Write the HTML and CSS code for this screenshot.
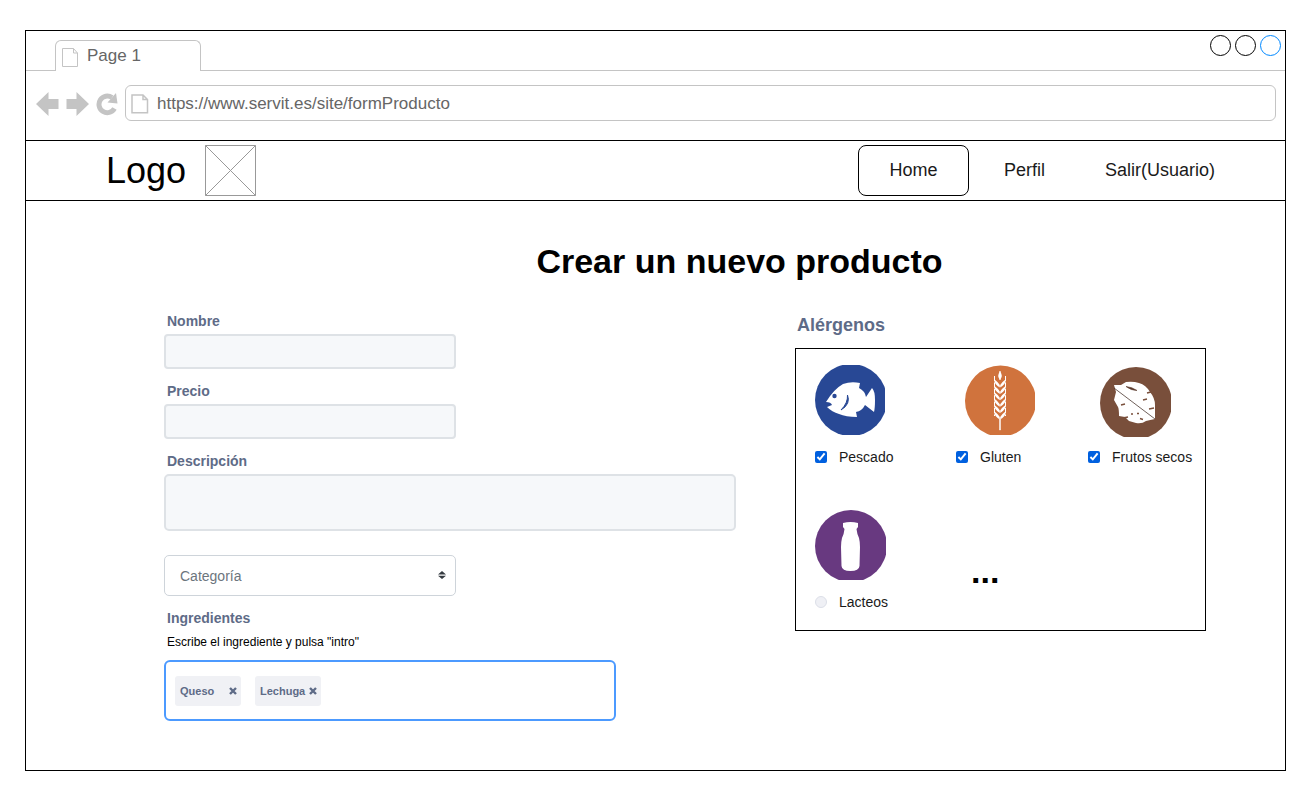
FILE: index.html
```html
<!DOCTYPE html>
<html lang="es">
<head>
<meta charset="utf-8">
<meta name="viewport" content="width=device-width, initial-scale=1">
<title>Crear un nuevo producto</title>
<link rel="stylesheet" href="styles.css">
</head>
<body>
<div class="window">
  <div class="tabstrip">
    <div class="strip-lead"></div>
    <div class="tab">
      <svg class="tab-icon" width="17" height="19" viewBox="0 0 17 19" fill="none" stroke="#c4c4c4"><path d="M.5 .5H11.500L15.500 5V18.500H.5ZM11.500 .5V5H15.500"/></svg>
      <span>Page 1</span>
    </div>
    <div class="strip-rest">
      <button class="win-btn" type="button" aria-label="Minimizar"></button>
      <button class="win-btn" type="button" aria-label="Maximizar"></button>
      <button class="win-btn win-close" type="button" aria-label="Cerrar"></button>
    </div>
  </div>

  <div class="toolbar">
    <button class="tool" type="button" aria-label="Atrás"><svg width="23" height="24" viewBox="0 0 23 24" fill="#c4c4c4"><path d="M0 12L12.500 0V7H22.500V17H12.500V24Z"/></svg></button>
    <button class="tool" type="button" aria-label="Adelante"><svg width="23" height="24" viewBox="0 0 23 24" fill="#c4c4c4"><path d="M23 12L10.500 0V7H.5V17H10.500V24Z"/></svg></button>
    <button class="tool" type="button" aria-label="Recargar"><svg width="22" height="24" viewBox="0 0 22 24"><path d="M18.500 16.500A8.300 8.300 0 1 1 16 5.500" fill="none" stroke="#c4c4c4" stroke-width="5"/><path d="M20 1L21.500 11.500L11.500 10.500Z" fill="#c4c4c4"/></svg></button>
    <div class="address">
      <svg width="18" height="20" viewBox="0 0 18 20" fill="none" stroke="#c4c4c4" stroke-width="1.500"><path d="M1 1H12L16.500 5.500V18.800H1ZM12 1V5.500H16.500"/></svg>
      <input class="url" type="text" aria-label="Dirección" value="https://www.servit.es/site/formProducto">
    </div>
  </div>

  <header class="site-header">
    <div class="brand">
      <span class="brand-name">Logo</span>
      <svg width="51" height="51" viewBox="0 0 51 51" fill="none" stroke="#999"><path d="M.5 .5H50.500V50.500H.5ZM.5 .5L50.500 50.500M50.500 .5L.5 50.500"/></svg>
    </div>
    <nav class="nav">
      <a class="nav-link active" href="#">Home</a>
      <a class="nav-link" href="#">Perfil</a>
      <a class="nav-link" href="#">Salir(Usuario)</a>
    </nav>
  </header>

  <main class="main">
    <h1 class="title">Crear un nuevo producto</h1>
    <form class="columns">
      <div class="fields">
        <div class="field">
          <label class="label" for="nombre">Nombre</label>
          <input class="control half" id="nombre" type="text">
        </div>
        <div class="field">
          <label class="label" for="precio">Precio</label>
          <input class="control half" id="precio" type="text">
        </div>
        <div class="field">
          <label class="label" for="descripcion">Descripción</label>
          <textarea class="control area" id="descripcion"></textarea>
        </div>
        <div class="select-wrap half">
          <select class="select" aria-label="Categoría"><option>Categoría</option></select>
          <svg class="select-arrows" width="8" height="8" viewBox="0 0 8 8" fill="#343a40"><path d="M0 3.400L4 0L8 3.400ZM0 4.800H8L4 8Z"/></svg>
        </div>
        <div class="ingredients">
          <label class="label" for="ingrediente">Ingredientes</label>
          <p class="hint">Escribe el ingrediente y pulsa "intro"</p>
          <div class="chips">
            <span class="chip">Queso <button class="chip-x" type="button" aria-label="Quitar Queso"><svg width="8" height="8" viewBox="0 0 8 8" stroke="#5e6b87" stroke-width="2.400"><path d="M1 1L7 7M7 1L1 7"/></svg></button></span>
            <span class="chip">Lechuga <button class="chip-x" type="button" aria-label="Quitar Lechuga"><svg width="8" height="8" viewBox="0 0 8 8" stroke="#5e6b87" stroke-width="2.400"><path d="M1 1L7 7M7 1L1 7"/></svg></button></span>
            <input class="chip-input" id="ingrediente" type="text">
          </div>
        </div>
      </div>

      <section class="allergens">
        <h2 class="subtitle">Alérgenos</h2>
        <div class="grid">
          <div class="item">
            <svg class="pic" width="70" height="70" viewBox="0 0 70 70">
              <circle cx="36" cy="35" r="36" fill="#284895"/>
              <path d="M11 37Q19 24 28 19Q36 16 45 18L44 23Q50 26 51 32L57 23Q60 26 60 35Q60 43 59 47L50 40Q47 46 41 47L42 52Q31 52 24 49Q17 47 12 42L17 40Q16 37 11 37Z" fill="#fff"/>
              <circle cx="19.500" cy="31" r="2.200" fill="#284895"/>
              <path d="M32.500 30Q36 39 26 45Q33 38 32.500 30Z" fill="#284895" stroke="#284895"/>
            </svg>
            <label class="check"><input type="checkbox" checked>Pescado</label>
          </div>
          <div class="item">
            <svg class="pic inset" width="70" height="70" viewBox="0 0 70 70">
              <circle cx="35.500" cy="36" r="35.500" fill="#d0733d"/>
              <path d="M35 6Q38 11 35 15Q32 11 35 6ZM34.600 54H35.400V65H34.600Z" fill="#fff" stroke="#fff" stroke-width=".6"/>
              <g fill="#fff">
                <path id="grain" d="M34.800 20Q33 17 29 14Q29 19 34.800 22.500ZM35.200 20Q37 17 41 14Q41 19 35.200 22.500Z"/>
                <use href="#grain" y="6.400"/><use href="#grain" y="12.800"/><use href="#grain" y="19.200"/><use href="#grain" y="25.600"/><use href="#grain" y="32"/>
              </g>
              <path d="M29.500 11V51M40.500 11V51" stroke="#fff" stroke-width="1" stroke-dasharray="5 1.400"/>
            </svg>
            <label class="check"><input type="checkbox" checked>Gluten</label>
          </div>
          <div class="item">
            <svg class="pic inset-more" width="71" height="72" viewBox="0 0 71 72">
              <circle cx="36" cy="38" r="36" fill="#794f3b"/>
              <path d="M14 20L21 20L26 17Q33 16 39 18Q46 20 50 27Q55 33 55 40V54Q50 55 46 56Q42 59 36 58L29 56L25 52L19 51Q19 44 18 42L14 35L16 27Z" fill="#fff"/>
              <path d="M14 23L55 54" stroke="#4b3931" stroke-width=".8"/>
              <path d="M26 21.500Q32 22 37 25.500Q31 25.500 26 21.500Z" fill="#5b3b2d" stroke="#5b3b2d" stroke-width=".6"/>
              <path d="M43 35L47 34M49 44L54 43M21 40L25 39M31 49H33M37 48.500H39M40 53.500L43 54.500M47 28L51 27M23 53L28 52" fill="none" stroke="#794f3b" stroke-width="1.400"/>
            </svg>
            <label class="check"><input type="checkbox" checked>Frutos secos</label>
          </div>
          <div class="item">
            <svg class="pic" width="71" height="70" viewBox="0 0 71 70">
              <circle cx="36" cy="36" r="36" fill="#683980"/>
              <path d="M28 13Q35.500 11 43 13V17L41.500 19Q42 24 44 28Q45 32 45 37L44.500 56Q44 61 35.500 61Q27 61 26.500 56L26 37Q26 32 27 28Q29 24 29.500 19L28 17Z" fill="#fff"/>
            </svg>
            <label class="check"><input class="dot" type="radio">Lacteos</label>
          </div>
          <div class="more">...</div>
        </div>
      </section>
    </form>
  </main>
</div>
</body>
</html>
```

FILE: styles.css
```css
* { box-sizing: border-box; }

body {
  margin: 0;
  padding: 30px 20px 30px 25px;
  background: #fff;
  color: #000;
  font-family: "Liberation Sans", Arial, sans-serif;
}

svg { display: block; flex: none; }
button { padding: 0; border: 0; background: none; }
input, select, textarea { margin: 0; font-family: inherit; }

.window { border: 1px solid #000; }

/* Browser chrome */
.tabstrip { display: flex; height: 40px; }
.strip-lead { width: 29px; border-bottom: 1px solid #c4c4c4; }
.tab {
  display: flex;
  align-items: center;
  gap: 8px;
  width: 146px;
  margin-top: 9px;
  padding-left: 6px;
  border: 1px solid #c4c4c4;
  border-bottom: 0;
  border-radius: 6px 6px 0 0;
  color: #666;
  font-size: 17px;
}
.tab-icon { margin-top: 2px; }
.strip-rest {
  display: flex;
  flex: 1;
  justify-content: flex-end;
  gap: 4px;
  padding: 4px 4px 0 0;
  border-bottom: 1px solid #c4c4c4;
}
.win-btn { width: 21px; height: 21px; border: 1px solid #000; border-radius: 50%; }
.win-close { border-color: #08f; }

.toolbar {
  display: flex;
  align-items: center;
  gap: 7px;
  padding: 14px 9px 19px 10px;
}
.tool { padding-top: 2px; }
.address {
  display: flex;
  flex: 1;
  align-items: center;
  gap: 8px;
  height: 36px;
  padding: 2px 5px 0;
  border: 1px solid #c4c4c4;
  border-radius: 6px;
}
.url {
  flex: 1;
  min-width: 0;
  padding: 0;
  border: 0;
  outline: 0;
  background: none;
  color: #666;
  font-size: 17px;
}

/* Site header */
.site-header {
  display: flex;
  align-items: center;
  justify-content: space-between;
  padding: 4px 45px 4px 80px;
  border: solid #000;
  border-width: 1px 0;
}
.brand { display: flex; align-items: center; gap: 19px; }
.brand-name { font-size: 36px; line-height: 40px; }
.nav { display: flex; }
.nav-link {
  display: flex;
  align-items: center;
  justify-content: center;
  min-width: 111px;
  height: 51px;
  padding: 0 24px;
  border: 1px solid transparent;
  border-radius: 8px;
  color: #1a1a1a;
  font-size: 18px;
  text-decoration: none;
}
.nav-link.active { border-color: #000; }

/* Product form */
.main { padding: 39px 79px 49px 138px; }
.title {
  margin: 0;
  padding-left: 109px;
  font-size: 34px;
  line-height: 42px;
  text-align: center;
}
.columns {
  display: grid;
  grid-template-columns: 572fr 411fr;
  align-items: start;
  gap: 59px;
}
.fields { display: flex; flex-direction: column; gap: 12px; padding-top: 29px; }
.field { display: flex; flex-direction: column; gap: 3px; }
.label {
  padding-left: 3px;
  color: #5e6b87;
  font-size: 14px;
  font-weight: bold;
  line-height: 20px;
}
.half { width: 51%; }
.control {
  height: 35px;
  padding: 0 10px;
  border: 2px solid #dee2e6;
  border-radius: 4px;
  background: #f6f8fa;
  font-size: 14px;
}
.area { height: 57px; border-radius: 5px; resize: none; }
.select-wrap { position: relative; margin-top: 12px; }
.select {
  display: block;
  width: 100%;
  height: 41px;
  padding: 0 15px;
  appearance: none;
  border: 1px solid #ced4da;
  border-radius: 5px;
  background: #fff;
  color: #6c757d;
  font-size: 14px;
}
.select-arrows { position: absolute; top: 16px; right: 10px; pointer-events: none; }
.ingredients { display: flex; flex-direction: column; }
.hint { margin: 5px 0 9px; padding-left: 3px; font-size: 12px; line-height: 18px; }
.chips {
  display: flex;
  align-items: center;
  gap: 14px;
  width: 79%;
  height: 61px;
  padding: 0 9px;
  border: 2px solid #4c9aff;
  border-radius: 6px;
}
.chip {
  display: flex;
  align-items: center;
  justify-content: space-between;
  min-width: 66px;
  height: 30px;
  padding: 0 4px 0 5px;
  border-radius: 3px;
  background: #f0f1f5;
  color: #5e6b87;
  font-size: 11px;
  font-weight: bold;
}
.chip-input { flex: 1; min-width: 0; border: 0; outline: 0; background: none; }

/* Allergens */
.subtitle {
  margin: 0 0 11px;
  padding: 31px 0 0 2px;
  color: #5e6b87;
  font-size: 18px;
  line-height: 24px;
}
.grid {
  display: grid;
  grid-template-columns: 141fr 132fr 117fr;
  row-gap: 43px;
  padding: 16px 0 18px 19px;
  border: 1px solid #000;
}
.item { display: flex; flex-direction: column; min-height: 102px; }
.inset { margin-left: 9px; }
.inset-more { margin-left: 12px; }
.check {
  display: flex;
  align-items: center;
  gap: 12px;
  margin-top: auto;
  color: #1a1a1a;
  font-size: 14px;
  line-height: 20px;
  white-space: nowrap;
}
.check input { width: 12px; height: 12px; accent-color: #0060df; }
.check .dot {
  appearance: none;
  border: 1px solid #dcdfe8;
  border-radius: 50%;
  background: #eff0f5;
}
.more { padding: 41px 0 0 15px; font-size: 34px; font-weight: bold; line-height: 40px; }
```
